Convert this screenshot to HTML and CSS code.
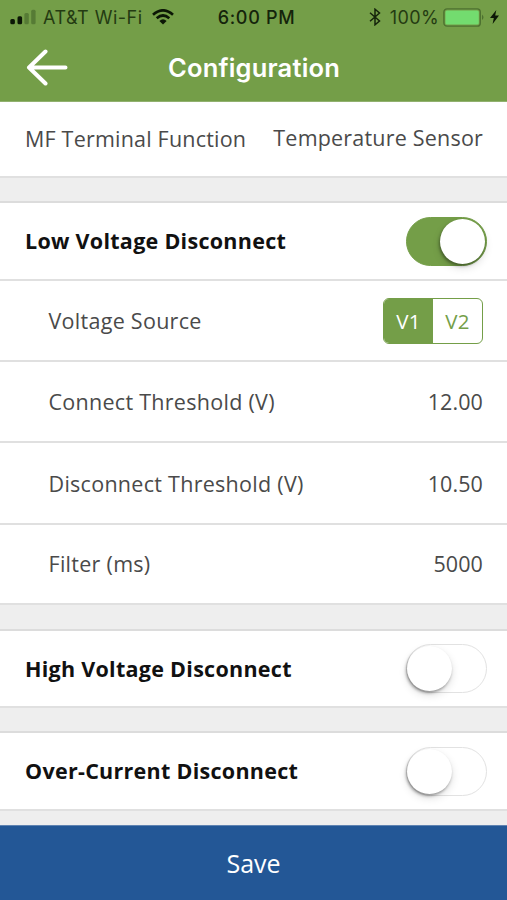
FILE: index.html
```html
<!DOCTYPE html>
<html lang="en">
<head>
<meta charset="utf-8">
<title>Configuration</title>
<link rel="stylesheet" href="styles.css">
</head>
<body>
<div class="screen">
  <header class="header">
    <div class="status">
      <div class="status-left">
        <svg class="signal" width="27" height="16" viewBox="0 0 27 16"><rect x="0.3" y="10" width="4.6" height="5.2" rx="1.5"/><rect x="7.5" y="7.2" width="4.6" height="8" rx="1.5"/><rect class="weak" x="14.4" y="4" width="4.4" height="11.2" rx="1.5"/><rect class="weak" x="21.2" y="0.8" width="4.4" height="14.4" rx="1.5"/></svg>
        <span class="carrier">AT&amp;T Wi-Fi</span>
        <svg class="wifi" width="22" height="16" viewBox="0 0 22 16"><path d="M1 5.7Q11-3 21 5.7" /><path d="M4.7 9.2Q11 3.8 17.3 9.2"/><path class="dot" d="M7.4 11.9Q11 8.7 14.6 11.9L11 15.6Z"/></svg>
      </div>
      <span class="clock">6:00 PM</span>
      <div class="status-right">
        <svg class="bluetooth" width="12" height="18" viewBox="0 0 12 18"><path d="M1 4.8L10.5 13L6 16.8V1.2L10.5 5L1 13.2"/></svg>
        <span class="percent">100%</span>
        <svg class="battery" width="42" height="19" viewBox="0 0 42 19"><rect class="shell" x="0.9" y="0.9" width="36.4" height="17.2" rx="3.2"/><rect class="charge" x="2.4" y="2.4" width="33.4" height="14.2" rx="1.6"/><path class="tip" d="M39 6.5Q42 9.3 39 12Z"/></svg>
        <svg class="bolt" width="9" height="14" viewBox="0 0 9 14"><path d="M6.3 0L0 8H3.8L2.6 14L9 5.6H5.2Z"/></svg>
      </div>
    </div>
    <div class="navbar">
      <svg class="back" width="42" height="38" viewBox="0 0 42 38"><path d="M19.5 2.5L3 18.5L19.5 34.5M3 18.5H39.5"/></svg>
      <h1 class="title">Configuration</h1>
    </div>
  </header>
  <main class="content">
    <section class="group first">
      <div class="row"><span class="label">MF Terminal Function</span><span class="value sensor">Temperature Sensor</span></div>
    </section>
    <section class="group limits">
      <div class="row heading"><span class="label">Low Voltage Disconnect</span><span class="switch on"><span class="knob"></span></span></div>
      <div class="row sub"><span class="label">Voltage Source</span><span class="segmented"><span class="segment active">V1</span><span class="segment">V2</span></span></div>
      <div class="row sub"><span class="label">Connect Threshold (V)</span><span class="value">12.00</span></div>
      <div class="row sub tall"><span class="label">Disconnect Threshold (V)</span><span class="value">10.50</span></div>
      <div class="row sub last"><span class="label">Filter (ms)</span><span class="value">5000</span></div>
    </section>
    <section class="group">
      <div class="row heading short"><span class="label">High Voltage Disconnect</span><span class="switch"><span class="knob"></span></span></div>
    </section>
    <section class="group">
      <div class="row heading"><span class="label">Over-Current Disconnect</span><span class="switch"><span class="knob"></span></span></div>
    </section>
  </main>
  <footer class="save">Save</footer>
</div>
</body>
</html>
```

FILE: styles.css
```css
* { box-sizing: border-box; }
body { margin: 0; font-family: "Open Sans", sans-serif; }
.screen { width: 507px; height: 900px; display: flex; flex-direction: column; background: #eee; overflow: hidden; }
svg { display: block; flex: none; }
span { white-space: nowrap; }

.header { height: 102px; background: #749e48; border-bottom: 1px solid #91b16f; flex: none; }
.status { height: 34px; padding: 0 8px 0 10px; display: grid; grid-template-columns: 1fr auto 1fr; align-items: center; font-family: Inter, sans-serif; font-size: 18px; color: #243b12; }
.status-left, .status-right { display: flex; align-items: center; }
.status-right { justify-content: flex-end; }
.signal { fill: #0c1706; }
.signal .weak { fill: #567b35; }
.carrier { margin-left: 6px; letter-spacing: 0.5px; }
.wifi { margin-left: 9px; fill: none; stroke: #0c1706; stroke-width: 2.7; }
.wifi .dot { fill: #0c1706; stroke: none; }
.clock { color: #15240b; font-weight: 500; letter-spacing: 0.7px; padding-left: 4px; }
.bluetooth { fill: none; stroke: #15240b; stroke-width: 1.5; }
.percent { margin-left: 9px; letter-spacing: 0.4px; }
.battery { margin-left: 4px; }
.shell { fill: none; stroke: #4d7130; stroke-width: 1.4; }
.charge { fill: #73dc6f; }
.tip { fill: #4d7130; }
.bolt { margin-left: 5px; fill: #0c1706; }

.navbar { height: 67px; display: grid; grid-template-columns: 84px 1fr 84px; align-items: center; }
.back { margin-left: 26px; fill: none; stroke: #fff; stroke-width: 4; stroke-linecap: round; stroke-linejoin: round; }
.title { margin: 0; padding-left: 1px; text-align: center; color: #fff; font: 600 25.5px/34px Inter, sans-serif; letter-spacing: 0.2px; }

.content { flex: 1; min-height: 0; }
.group { background: #fff; border-top: 2px solid #dcdcdc; margin-bottom: 23px; }
.first { border-top: 0; }
.limits { margin-bottom: 24px; }
.row { height: 81px; padding: 0 24px 0 25px; display: flex; align-items: center; justify-content: space-between; border-bottom: 2px solid #e0e0e0; font-size: 21.5px; line-height: 30px; color: #4a4a4a; letter-spacing: 0.2px; }
.first .row { height: 76px; }
.sensor { padding-bottom: 2px; }
.heading { height: 78px; padding-right: 20.5px; font-weight: 700; color: #111; letter-spacing: 0.28px; }
.short { height: 77px; }
.sub { padding-left: 48.5px; letter-spacing: 0.28px; }
.sub .value { letter-spacing: 0.1px; }
.tall { height: 82px; padding-top: 1px; }
.last { height: 80px; }

.switch { width: 81px; height: 49px; border-radius: 25px; border: 1.5px solid #e2e2e2; background: #fff; display: flex; align-items: center; }
.switch.on { background: #749e48; border-color: #749e48; justify-content: flex-end; padding-right: 1px; }
.knob { width: 45px; height: 45px; border-radius: 50%; background: #fff; box-shadow: -1px 2px 3px rgba(0,0,0,.35), 0 4px 9px rgba(0,0,0,.13); }

.segmented { width: 100px; height: 46px; display: flex; border: 1.5px solid #749e48; border-radius: 6px; overflow: hidden; font-size: 20.5px; }
.segment { flex: 1; display: flex; align-items: center; justify-content: center; color: #749e48; }
.active { background: #749e48; color: #fff; }

.save { height: 75px; flex: none; background: #235796; border-top: 1px solid #5f83b1; color: #fff; font-size: 25px; display: flex; align-items: center; justify-content: center; }
```
